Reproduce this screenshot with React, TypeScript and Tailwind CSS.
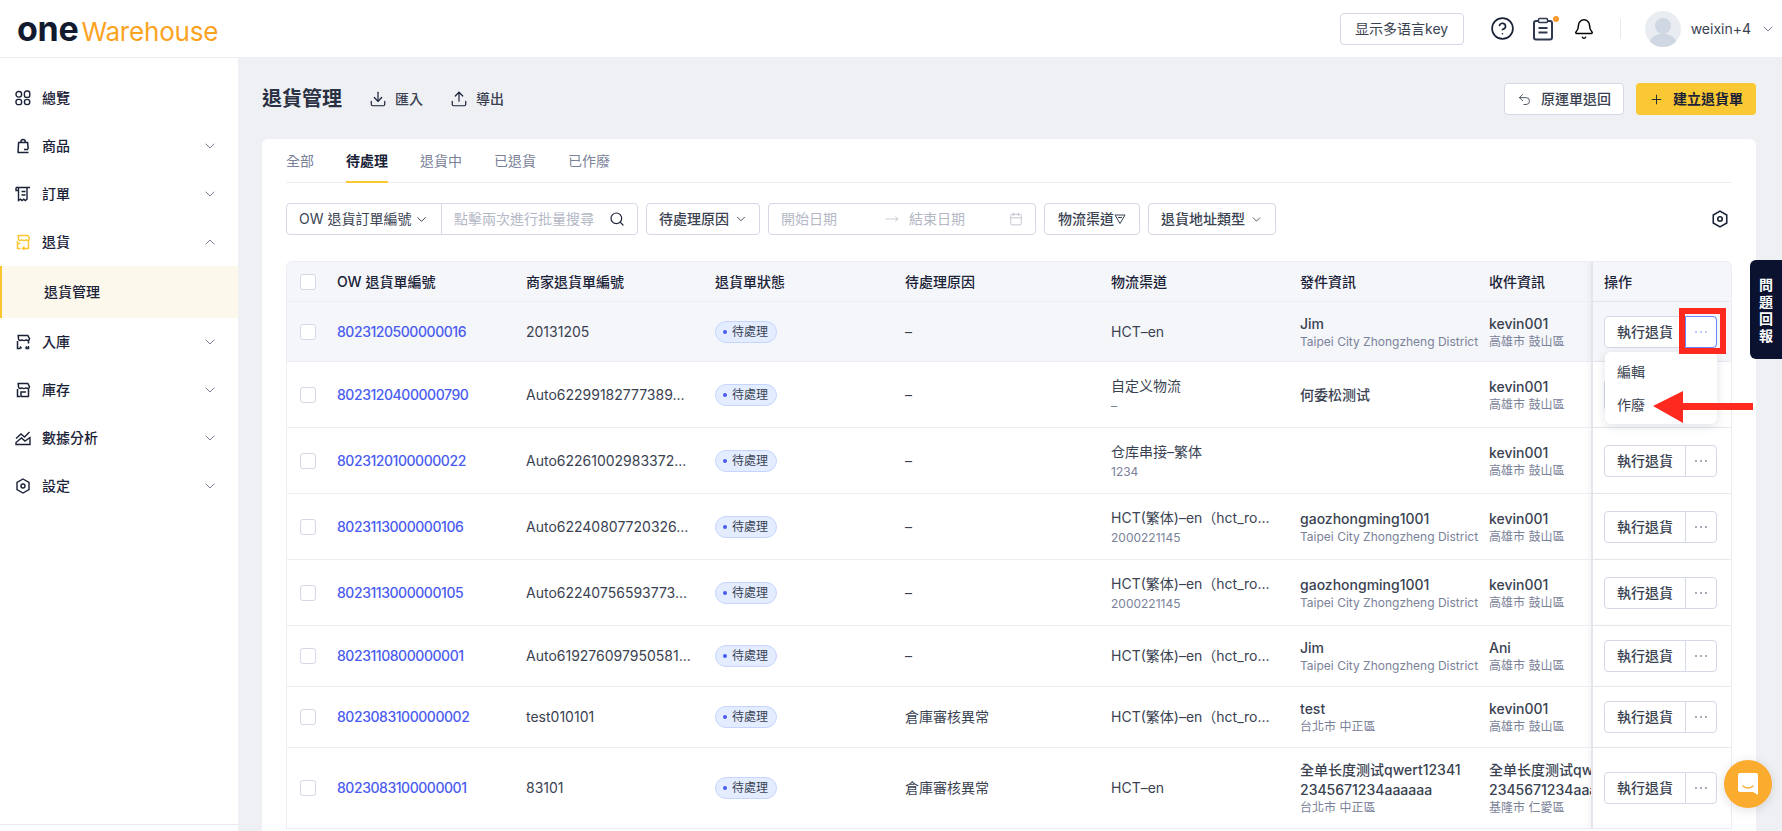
import { Bell, Calendar, ChevronDown, ChevronUp, CircleHelp, Download, MoveRight, Plus, Search, Undo2, Upload } from 'lucide-react';
import type { ReactNode } from 'react';

const ink = 'stroke-[#1a2238]';

function IconOverview() {
  return (
    <svg width="16" height="16" viewBox="0 0 16 16" fill="none" strokeWidth="1.4" className={ink}>
      <rect x="1" y="1.500" width="5.600" height="5.600" rx="2.600" />
      <rect x="9.400" y="1" width="5.400" height="6.400" rx="2.200" />
      <rect x="1" y="9.400" width="5.600" height="5.200" rx="2.200" />
      <rect x="9.400" y="9.400" width="5.400" height="5.200" rx="2.600" />
    </svg>
  );
}

function IconBag() {
  return (
    <svg width="16" height="16" viewBox="0 0 16 16" fill="none" strokeWidth="1.5" className={ink}>
      <path d="M2.500 14.500h11M3 14.500 3.600 4.500h9l.6 6.500" />
      <path d="M5.800 4.500c0-4 4.600-4 4.600 0M9 11.500h4.200" />
    </svg>
  );
}

function IconOrder() {
  return (
    <svg width="16" height="16" viewBox="0 0 16 16" fill="none" strokeWidth="1.4" className={ink}>
      <path d="M1 1.500h14M3.500 1.500v13l2-1.400 1.600 1.400 1.600-1.400 1.600 1.400 1.700-1.400V1.500" />
      <path d="M6.500 5.500h4M6.500 9h4M1 1.500v3h2" />
    </svg>
  );
}

function IconStore({ children, className }: { children: ReactNode; className: string }) {
  return (
    <svg width="16" height="16" viewBox="0 0 16 16" fill="none" strokeWidth="1.5" className={className}>
      <path d="M3.200 1.500h9.600l1.700 3.200c0 2.200-3 2.200-3.200.6-.3 1.600-4.300 1.600-4.600 0-.2 1.600-3.200 1.600-3.200-.6z" />
      <path d="M2.500 7v7.500h3M13.500 7v2.500" />
      {children}
    </svg>
  );
}

function IconChart() {
  return (
    <svg width="16" height="16" viewBox="0 0 16 16" fill="none" strokeWidth="1.4" className={ink}>
      <path d="M1 14.500h14V7.500L10 11 6.500 8 1 12.500z" />
      <path d="M1 8.500 6 4l3.500 3L14.500 2" />
    </svg>
  );
}

function IconHex({ size = 16 }: { size?: number }) {
  return (
    <svg width={size} height={size} viewBox="0 0 16 16" fill="none" strokeWidth="1.4" className={ink}>
      <path d="M8 1 14 4.500v7L8 15l-6-3.500v-7z" />
      <circle cx="8" cy="8" r="2" />
    </svg>
  );
}

function IconClipboard() {
  return (
    <svg width="22" height="24" viewBox="0 0 22 24" fill="none" strokeWidth="2" className="stroke-[#2f3a4f]">
      <rect x="2" y="4" width="18" height="18.500" rx="2" />
      <rect x="6.500" y="1.500" width="9" height="4" rx="1" className="fill-white" strokeWidth="1.500" />
      <path d="M6.500 11h9M6.500 15.500h9" />
    </svg>
  );
}

const navChevron = <ChevronDown size={16} strokeWidth={1.4} className="text-[#6f7690]" />;

const navItems = [
  { label: '總覽', icon: <IconOverview />, chevron: false },
  { label: '商品', icon: <IconBag />, chevron: true },
  { label: '訂單', icon: <IconOrder />, chevron: true },
];

const navItemsAfter = [
  {
    label: '入庫',
    icon: (
      <IconStore className={ink}>
        <path d="M13.500 12v2.500h-3M5 12.500l1.500 2M12 12.500l-1.500 2" />
      </IconStore>
    ),
  },
  {
    label: '庫存',
    icon: (
      <IconStore className={ink}>
        <path d="M6 14.500v-4.500h5M6 14.500h8M13.500 9v5.500" />
      </IconStore>
    ),
  },
  { label: '數據分析', icon: <IconChart /> },
  { label: '設定', icon: <IconHex /> },
];

function NavRow({ icon, label, right }: { icon: ReactNode; label: string; right?: ReactNode }) {
  return (
    <div className="flex h-12 items-center pl-[15px] pr-[20px]">
      <span className="flex w-[27px] shrink-0">{icon}</span>
      <span className="flex-1 text-sm font-medium text-[#1a2238]">{label}</span>
      {right}
    </div>
  );
}

function Sidebar() {
  return (
    <aside className="relative flex w-[238px] shrink-0 flex-col bg-white pt-4">
      {navItems.map((n) => (
        <NavRow key={n.label} icon={n.icon} label={n.label} right={n.chevron ? navChevron : undefined} />
      ))}
      <NavRow
        icon={
          <IconStore className="stroke-[#fbc531]">
            <path d="M13.500 9.500v5H7.500M9.500 12.500l-2 2 2 1.500M2.500 9.500h3" />
          </IconStore>
        }
        label="退貨"
        right={<ChevronUp size={16} strokeWidth={1.4} className="text-[#6f7690]" />}
      />
      <div className="flex h-[52px] items-center border-l-2 border-[#fbc531] bg-[#fdf8ec] pl-[42px] text-sm font-medium text-[#1a2238]">
        退貨管理
      </div>
      {navItemsAfter.map((n) => (
        <NavRow key={n.label} icon={n.icon} label={n.label} right={navChevron} />
      ))}
      <div className="absolute bottom-[6px] left-0 right-0 border-t border-[#e8eaf1]" />
    </aside>
  );
}

function Header() {
  return (
    <header className="flex h-[58px] shrink-0 items-center border-b border-[#eceef3] bg-white pl-[17px] pr-[6px]">
      <div className="flex items-baseline leading-none">
        <span className="text-[34px] font-bold tracking-[-0.3px] text-[#111a2e]">one</span>
        <span className="ml-[3px] text-[26px] font-normal tracking-[-0.2px] text-[#fba31f]">Warehouse</span>
      </div>
      <div className="ml-auto flex items-center">
        <button className="flex h-8 w-[124px] items-center justify-center rounded border border-[#d5d8e6] text-sm text-[#3a4252]">
          显示多语言key
        </button>
        <CircleHelp size={25} strokeWidth={1.6} className="ml-[26px] text-[#1a2238]" />
        <div className="relative ml-[17px] flex">
          <IconClipboard />
          <span className="absolute -top-[1px] -right-[5px] h-[6px] w-[6px] rounded-full bg-[#fb9a2c]" />
        </div>
        <Bell size={22} strokeWidth={1.6} className="ml-[19px] text-black" />
        <div className="ml-[25px] h-[20px] w-px bg-[#e8eaf1]" />
        <div className="relative ml-[24px] h-9 w-9 overflow-hidden rounded-full bg-[#e9edf2]">
          <span className="absolute left-[10px] top-[7px] h-4 w-4 rounded-full bg-[#cfd7e3]" />
          <span className="absolute left-[4px] top-[23px] h-6 w-7 rounded-full bg-[#cfd7e3]" />
        </div>
        <span className="ml-[10px] text-sm text-[#3a4252]">weixin+4</span>
        <ChevronDown size={16} strokeWidth={1.4} className="ml-[9px] text-[#6f7690]" />
      </div>
    </header>
  );
}

function Filters() {
  return (
    <div className="mt-5 flex h-8 items-stretch gap-2 text-sm">
      <div className="flex w-[352px] rounded border border-[#d5d8e6]">
        <div className="flex w-[155px] items-center border-r border-[#d5d8e6] pl-3 text-[#3a4252]">
          OW 退貨訂單編號
          <ChevronDown size={15} strokeWidth={1.6} className="ml-[3px]" />
        </div>
        <div className="flex flex-1 items-center pl-3 pr-3 text-[#b4b8c5]">
          點擊兩次進行批量搜尋
          <Search size={16} strokeWidth={1.8} className="ml-auto text-[#1a2238]" />
        </div>
      </div>
      <div className="flex w-[114px] items-center rounded border border-[#d5d8e6] pl-3 font-medium text-[#3a4252]">
        待處理原因
        <ChevronDown size={14} strokeWidth={1.6} className="ml-[5px]" />
      </div>
      <div className="flex w-[268px] items-center rounded border border-[#d5d8e6] pl-3 pr-3 text-[#b4b8c5]">
        <span className="w-[104px]">開始日期</span>
        <MoveRight size={14} strokeWidth={1.2} />
        <span className="ml-[10px]">結束日期</span>
        <Calendar size={14} strokeWidth={1.3} className="ml-auto" />
      </div>
      <div className="flex w-[96px] items-center justify-center rounded border border-[#d5d8e6] font-medium text-[#3a4252]">
        物流渠道
        <svg width="12" height="12" viewBox="0 0 12 12" fill="none" className="stroke-[#3a4252]" strokeWidth="1">
          <path d="M1 2h10L6 10.500zM4 4.500h4" />
        </svg>
      </div>
      <div className="flex w-[128px] items-center justify-center rounded border border-[#d5d8e6] font-medium text-[#3a4252]">
        退貨地址類型
        <ChevronDown size={13} strokeWidth={1.6} className="ml-[5px]" />
      </div>
      <div className="ml-auto flex w-6 items-center justify-end">
        <span className="mr-[3px] flex">
          <IconHex size={18} />
        </span>
      </div>
    </div>
  );
}

type Row = {
  id: string;
  merchant: string;
  reason: string;
  carrier: string;
  carrierSub?: string;
  sender: string[];
  senderSub?: string;
  receiver: string[];
  receiverSub: string;
  height: string;
  bg?: string;
};

const taipei = 'Taipei City Zhongzheng District';
const kaohsiung = '高雄市 鼓山區';
const hctLong = 'HCT(繁体)–en（hct_ro...';

const rows: Row[] = [
  { id: '8023120500000016', merchant: '20131205', reason: '–', carrier: 'HCT–en', sender: ['Jim'], senderSub: taipei, receiver: ['kevin001'], receiverSub: kaohsiung, height: 'h-[60px]', bg: 'bg-[#f5f6f9]' },
  { id: '8023120400000790', merchant: 'Auto62299182777389...', reason: '–', carrier: '自定义物流', carrierSub: '–', sender: ['何委松测试'], receiver: ['kevin001'], receiverSub: kaohsiung, height: 'h-[66px]' },
  { id: '8023120100000022', merchant: 'Auto62261002983372...', reason: '–', carrier: '仓库串接–繁体', carrierSub: '1234', sender: [], receiver: ['kevin001'], receiverSub: kaohsiung, height: 'h-[66px]' },
  { id: '8023113000000106', merchant: 'Auto62240807720326...', reason: '–', carrier: hctLong, carrierSub: '2000221145', sender: ['gaozhongming1001'], senderSub: taipei, receiver: ['kevin001'], receiverSub: kaohsiung, height: 'h-[66px]' },
  { id: '8023113000000105', merchant: 'Auto62240756593773...', reason: '–', carrier: hctLong, carrierSub: '2000221145', sender: ['gaozhongming1001'], senderSub: taipei, receiver: ['kevin001'], receiverSub: kaohsiung, height: 'h-[66px]' },
  { id: '8023110800000001', merchant: 'Auto619276097950581...', reason: '–', carrier: hctLong, sender: ['Jim'], senderSub: taipei, receiver: ['Ani'], receiverSub: kaohsiung, height: 'h-[61px]' },
  { id: '8023083100000002', merchant: 'test010101', reason: '倉庫審核異常', carrier: hctLong, sender: ['test'], senderSub: '台北市 中正區', receiver: ['kevin001'], receiverSub: kaohsiung, height: 'h-[61px]' },
  { id: '8023083100000001', merchant: '83101', reason: '倉庫審核異常', carrier: 'HCT–en', sender: ['全单长度测试qwert12341', '2345671234aaaaaa'], senderSub: '台北市 中正區', receiver: ['全单长度测试qwert12341', '2345671234aaaaaa'], receiverSub: '基隆市 仁愛區', height: 'h-[81px]' },
];

const gridCols = 'grid grid-cols-[50px_189px_189px_190px_206px_189px_189px_102px_140px]';

function Checkbox() {
  return <span className="ml-[13px] block h-4 w-4 rounded-[3px] border border-[#d5d8e6] bg-white" />;
}

function Person({ lines, sub }: { lines: string[]; sub?: string }) {
  return (
    <div className="flex h-full flex-col justify-center overflow-hidden whitespace-nowrap">
      {lines.map((l) => (
        <div key={l} className="text-sm font-medium leading-5 text-[#3a4252]">
          {l}
        </div>
      ))}
      {sub && <div className="text-xs leading-4 text-[#7a8299]">{sub}</div>}
    </div>
  );
}

function Actions({ active }: { active?: boolean }) {
  const dot = active ? 'h-[2px] w-[2px] rounded-full bg-[#a9b8fb]' : 'h-[2px] w-[2px] rounded-full bg-[#8a90a5]';
  return (
    <div className="flex h-8 w-[113px] rounded border border-[#d5d8e6] bg-white">
      <div className="flex w-[81px] items-center justify-center border-r border-[#d5d8e6] text-sm font-medium text-[#3a4252]">
        執行退貨
      </div>
      <div
        className={
          active
            ? 'flex flex-1 items-center justify-center gap-[3px] rounded-r-[3px] outline outline-1 outline-[#6a85fb]'
            : 'flex flex-1 items-center justify-center gap-[3px]'
        }
      >
        <span className={dot} />
        <span className={dot} />
        <span className={dot} />
      </div>
    </div>
  );
}

function Table() {
  return (
    <div className="mt-[26px] overflow-hidden rounded-t-md border-x border-t border-[#eceef3] text-sm">
      <div className={`${gridCols} h-[40px] items-center border-b border-[#eceef3] bg-[#f5f6f9] font-medium text-[#1a2238]`}>
        <Checkbox />
        <div>OW 退貨單編號</div>
        <div>商家退貨單編號</div>
        <div>退貨單狀態</div>
        <div>待處理原因</div>
        <div>物流渠道</div>
        <div>發件資訊</div>
        <div>收件資訊</div>
        <div className="flex h-full items-center border-l-2 border-[#e4e6ee] pl-[11px] shadow-[-3px_0_4px_rgba(0,0,0,0.04)]">操作</div>
      </div>
      {rows.map((r, i) => (
        <div key={r.id} className={`${gridCols} ${r.height} ${r.bg ?? 'bg-white'} items-center border-b border-[#eceef3] text-[#3a4252]`}>
          <Checkbox />
          <div className="font-medium tracking-[-0.45px] text-[#4a5cf0]">{r.id}</div>
          <div>{r.merchant}</div>
          <div className="flex items-center">
            <span className="inline-flex h-[22px] items-center gap-[5px] rounded-full border border-[#c6d5ff] bg-[#e3edff] pl-[7px] pr-2 text-xs">
              <span className="h-1 w-1 rounded-full bg-[#4a5cf0]" />
              待處理
            </span>
          </div>
          <div>{r.reason}</div>
          <div className="flex h-full flex-col justify-center whitespace-nowrap">
            <div className="leading-[22px]">{r.carrier}</div>
            {r.carrierSub && <div className="text-xs leading-[18px] text-[#7a8299]">{r.carrierSub}</div>}
          </div>
          <Person lines={r.sender} sub={r.senderSub} />
          <Person lines={r.receiver} sub={r.receiverSub} />
          <div className="flex h-full items-center border-l-2 border-[#e4e6ee] bg-inherit pl-[11px] shadow-[-3px_0_4px_rgba(0,0,0,0.04)]">
            <Actions active={i === 0} />
          </div>
        </div>
      ))}
    </div>
  );
}

export default function App() {
  return (
    <div className="relative flex h-screen flex-col overflow-hidden bg-[#eef0f4] [font-family:Inter,'Noto_Sans_CJK_TC',sans-serif]">
      <Header />
      <div className="flex min-h-0 flex-1">
        <Sidebar />
        <main className="min-w-0 flex-1 pl-6 pr-[26px] pt-[25px]">
          <div className="flex h-8 items-center text-sm">
            <h1 className="text-xl font-semibold text-[#2a3142]">退貨管理</h1>
            <span className="ml-[27px] flex items-center gap-2 font-medium text-[#3a4252]">
              <Download size={18} strokeWidth={1.6} className="text-[#1a2238]" />
              匯入
            </span>
            <span className="ml-[27px] flex items-center gap-2 font-medium text-[#3a4252]">
              <Upload size={18} strokeWidth={1.6} className="text-[#1a2238]" />
              導出
            </span>
            <button className="ml-auto flex h-8 w-[120px] items-center justify-center gap-[9px] rounded border border-[#d5d8e6] bg-white font-medium text-[#3a4252]">
              <Undo2 size={15} strokeWidth={1.4} />
              原運單退回
            </button>
            <button className="ml-3 flex h-8 w-[120px] items-center justify-center gap-[9px] rounded bg-[#fac832] font-semibold text-[#1a2238]">
              <Plus size={15} strokeWidth={1.5} />
              建立退貨單
            </button>
          </div>
          <section className="mt-6 h-[800px] rounded-md bg-white px-6">
            <div className="flex h-11 gap-8 border-b border-[#eceef3] text-sm text-[#7a8299]">
              <span className="flex items-center">全部</span>
              <span className="relative flex items-center font-semibold text-[#1a2238]">
                待處理
                <span className="absolute -bottom-px left-0 right-0 h-[2px] bg-[#fac832]" />
              </span>
              <span className="flex items-center">退貨中</span>
              <span className="flex items-center">已退貨</span>
              <span className="flex items-center">已作廢</span>
            </div>
            <Filters />
            <Table />
          </section>
        </main>
      </div>

      {/* dropdown opened from the first row */}
      <div className="absolute left-[1605px] top-[352px] flex h-[72px] w-[112px] flex-col rounded-md bg-white pl-3 text-sm text-[#3a4252] shadow-[0_2px_10px_rgba(30,40,80,0.14)]">
        <div className="mt-[9px] leading-[22px]">編輯</div>
        <div className="mt-[11px] leading-[22px]">作廢</div>
      </div>

      {/* red annotations from the screenshot */}
      <div className="absolute left-[1679px] top-[308px] h-[46px] w-[47px] border-[6px] border-[#ff2a1f]" />
      <svg width="102" height="34" viewBox="0 0 102 34" className="absolute left-[1652px] top-[390px]">
        <path d="M1 16 31 1v12h70v7H31v13z" fill="#ff2a1f" />
      </svg>

      <div className="absolute right-0 top-[260px] flex h-[99px] w-[32px] flex-col items-center justify-center rounded-l-md bg-[#0b1230] text-sm font-semibold leading-[17px] text-white">
        <span>問</span>
        <span>題</span>
        <span>回</span>
        <span>報</span>
      </div>

      <div className="absolute left-[1724px] top-[760px] flex h-12 w-12 items-center justify-center rounded-full bg-[#fbab2e] shadow-[0_2px_12px_rgba(0,0,0,0.12)]">
        <svg width="22" height="24" viewBox="0 0 22 24">
          <path d="M3 1h16a2 2 0 0 1 2 2v20l-5-3H3a2 2 0 0 1-2-2V3a2 2 0 0 1 2-2z" fill="#fff" />
          <path d="M6 14c3 2.500 7 2.500 10 0" fill="none" stroke="#fbab2e" strokeWidth="1.500" strokeLinecap="round" />
        </svg>
      </div>
    </div>
  );
}
